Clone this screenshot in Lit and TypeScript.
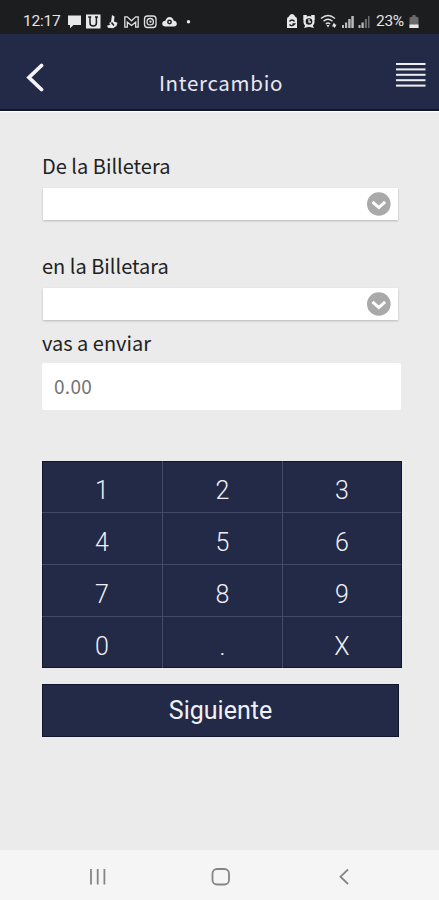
import { LitElement, html, css, svg } from "lit";
import { customElement, property } from "lit/decorators.js";

@customElement("status-bar")
class StatusBar extends LitElement {
  static styles = css`
    :host {
      display: flex;
      justify-content: space-between;
      height: 34px;
      padding: 8px 20px 0 23px;
      box-sizing: border-box;
      background: #1c1d1f;
      color: #e4e4e6;
      font: 15.5px/26px Roboto, sans-serif;
    }
    .group { display: flex; height: 26px; align-items: center; }
    .clock { width: 44px; letter-spacing: -0.2px; white-space: nowrap; }
    .pct { width: 33px; font-size: 15.5px; letter-spacing: -0.3px; }
    svg { display: block; fill: #e8e8ea; stroke: none; }
    .line { fill: none; stroke: #e0e0e2; stroke-width: 1.3; }
    .dark { fill: #1c1d1f; }
    .cut { fill: none; stroke: #1c1d1f; stroke-width: 1.5; }
    .dim { fill: #6a6a6d; }
    .mid { fill: #bbbbbe; }
  `;
  render() {
    return html`
      <div class="group">
        <span class="clock">12:17</span>
        <svg width="126" height="24" viewBox="67 8 126 24">
          <path d="M68 14.500h13v9.500H73.500L70 27.200V24h-2z" />
          <path d="M86 13.500h14.500v14H86z" />
          <path class="cut" d="M88.200 16h3M90 16v6q0 3 3.200 3t3.200-3v-6M95 16h3" />
          <path d="M112 14l2.500 1.500-.5 5 3.500 1.200-1 3.300-3.500 2.300-5-.6-1-2 3.500-1.200-1.500-1.500 2-1z" />
          <path class="cut" d="M111.500 21.500l2.500 3" stroke-width="1" />
          <path class="line" d="M124.800 15.800h2.500l4.200 4 4.200-4h2.500v10.400h-2.500v-5l-4.200 3.300-4.200-3.300v5h-2.500z" />
          <rect class="line" x="144.500" y="15" width="11.500" height="11.500" rx="3" />
          <circle class="line" cx="150.200" cy="20.700" r="3.200" />
          <circle cx="150.500" cy="20.700" r="1.100" />
          <path d="M165.500 25.500q-3.500-.3-3.300-3 .3-2.500 3.200-2.700Q166.500 16 169.500 16q3.300 0 4.300 3.800 2.800.2 3 2.900.1 2.600-3 2.800z" />
          <circle class="cut" cx="169.500" cy="21" r="1.700" stroke-width="1" />
          <circle cx="188.500" cy="20.700" r="1.700" />
        </svg>
      </div>
      <div class="group">
        <svg width="90" height="24" viewBox="286 8 90 24">
          <path d="M287 27V18q0-2 2-2.500Q289.500 13 292 13t3 2.500q2 .5 2 2.500v9z" />
          <path class="cut" d="M289.500 20.500q2.500-3 5 0M289.500 23.500q2.500 2.500 5-.5h-2" />
          <circle cx="309" cy="20.500" r="5.600" />
          <path d="M303.300 14h3.500v3l-2 2h-1.500zM314.700 14h-3.500v3l2 2h1.500zM304 27l2-4 2 3zM314 27l-2-4-2 3z" />
          <circle class="dark" cx="309" cy="20.500" r="3.300" />
          <path class="line" d="M309 18v3h2" />
          <path class="line" d="M321 17.500q7-6 14 0M323.500 20.300q4.500-4 9 0M325.800 23q2.200-2 4.400 0" stroke-width="1.600" />
          <path d="M326.500 24h3l-1.500 2.500zM332 25.500l2-4 2 4zM332.500 23.500h4l-2 3.500z" />
          <path class="mid" d="M342 24h2v3h-2zM345 21.500h2.200V27H345zM348.200 18h2.400v9h-2.400zM351.300 15h2.500v12h-2.500z" />
          <path class="mid" d="M358.500 24h2v3h-2zM361.500 21.500h2.200V27h-2.200z" />
          <path class="dim" d="M364.800 18h2.200v9h-2.200zM368 15h1.500v12H368z" />
        </svg>
        <span class="pct">23%</span>
        <svg width="10" height="24" viewBox="0 8 10 24">
          <path class="dim" d="M.5 27V16.500l3-1V14h3v1.500l3 1V27z" />
          <path d="M.5 23.500h9V27h-9z" />
        </svg>
      </div>`;
  }
}

@customElement("wallet-select")
class WalletSelect extends LitElement {
  static styles = css`
    :host {
      display: flex;
      align-items: center;
      justify-content: flex-end;
      width: 355px;
      height: 32px;
      margin-left: 1px;
      padding-right: 7px;
      box-sizing: border-box;
      background: #fff;
      box-shadow: 0 1px 2px rgba(0, 0, 0, 0.22);
    }
    svg { display: block; }
  `;
  render() {
    return html`<svg width="25" height="24" viewBox="0 0 25 24">
      <circle cx="12.800" cy="12" r="11.800" fill="#a9a9a9" />
      <path d="M6.500 9.800l6.300 5.700 6.300-5.700" fill="none" stroke="#fff" stroke-width="3" />
    </svg>`;
  }
}

@customElement("app-root")
class AppRoot extends LitElement {
  @property({ attribute: false }) keys = ["1", "2", "3", "4", "5", "6", "7", "8", "9", "0", ".", "X"];

  static styles = css`
    :host {
      display: flex;
      flex-direction: column;
      height: 900px;
      background: #ebebeb;
      font-family: "Noto Sans CJK JP", "Noto Sans", sans-serif;
      color: #222;
    }
    svg { display: block; }
    header {
      display: grid;
      grid-template-columns: 60px 1fr 60px;
      height: 77px;
      box-sizing: border-box;
      background: #232a47;
      border-bottom: 2px solid #12162b;
      box-shadow: 0 1px 1px #fff;
    }
    .back { padding: 29px 0 0 26px; }
    .title {
      padding: 33px 0 0 3px;
      text-align: center;
      font-size: 20.5px;
      line-height: 31px;
      letter-spacing: 0.7px;
      color: #e9e9ef;
    }
    .menu { padding: 28px 0 0 17px; }
    main { flex: 1; padding: 40px 37px 0 42px; }
    .label { height: 30px; font-size: 20px; line-height: 30px; }
    .first { margin-bottom: 7px; }
    .second { margin: 31px 0 7px; }
    .third { margin: 8px 0 5px; }
    .amount {
      height: 47px;
      width: 359px;
      padding-left: 12px;
      box-sizing: border-box;
      border-radius: 2px;
      background: #fff;
      color: #747474;
      font-size: 19px;
      letter-spacing: 0.3px;
      line-height: 46px;
    }
    .pad {
      display: grid;
      grid-template-columns: 121px 120px 119px;
      grid-template-rows: repeat(4, 52px);
      width: 360px;
      height: 207px;
      overflow: hidden;
      margin-top: 51px;
      background: #232a47;
      box-shadow: inset 0 0 0 1px #12152e;
    }
    .key {
      display: flex;
      align-items: center;
      justify-content: center;
      box-sizing: border-box;
      padding-top: 8px;
      border-right: 1px solid #434966;
      border-bottom: 1px solid #434966;
      font: 300 25px/30px Roboto, sans-serif;
      color: #f0f1f6;
    }
    .key:nth-child(3n) { border-right-color: transparent; }
    .key:nth-child(n + 10) { border-bottom-color: transparent; }
    .next {
      width: 357px;
      height: 53px;
      margin-top: 16px;
      background: #232a47;
      box-shadow: inset 0 0 0 1px #12152e;
      text-align: center;
      font: 400 25px/53px Roboto, sans-serif;
      color: #f1f1f5;
    }
    .nav {
      display: flex;
      height: 50px;
      background: #f5f5f5;
    }
  `;

  render() {
    return html`
      <status-bar></status-bar>
      <header>
        <div class="back">
          <svg width="18" height="29" viewBox="0 0 18 29">
            <path d="M15.500 2.500L3 14.500l12.500 12" fill="none" stroke="#f4f4f8" stroke-width="3.800" stroke-linecap="round" />
          </svg>
        </div>
        <div class="title">Intercambio</div>
        <div class="menu">
          <svg width="30" height="26" viewBox="0 0 30 26">
            ${[0, 1, 2, 3, 4].map((i) => svg`<rect x="0" y=${1 + i * 5.4} width="29.500" height="2" fill="#eeeef2" />`)}
          </svg>
        </div>
      </header>
      <main>
        <div class="label first">De la Billetera</div>
        <wallet-select></wallet-select>
        <div class="label second">en la Billetara</div>
        <wallet-select></wallet-select>
        <div class="label third">vas a enviar</div>
        <div class="amount">0.00</div>
        <div class="pad">${this.keys.map((k) => html`<div class="key">${k}</div>`)}</div>
        <div class="next">Siguiente</div>
      </main>
      <div class="nav">
        <svg width="439" height="50" viewBox="0 0 439 50" fill="none" stroke="#858585" stroke-width="1.800">
          <path d="M91 19v15.500M97.700 19v15.500M104.400 19v15.500" />
          <rect x="212.500" y="19" width="16.500" height="15.500" rx="4.500" />
          <path d="M348 19.500l-7.500 7.200 7.500 7.300" />
        </svg>
      </div>`;
  }
}
